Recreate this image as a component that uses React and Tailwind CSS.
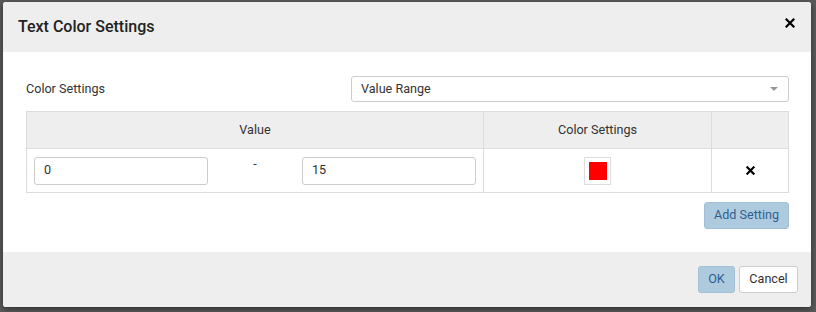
export default function App() {
  return (
    <div className="w-[816px] h-[312px] bg-[#5a5a5a] relative overflow-hidden" style={{ fontFamily: "Roboto, 'Liberation Sans', sans-serif" }}>
      <div className="absolute left-[3px] top-[2px] w-[808px] h-[305px] bg-white rounded-[3px] shadow-[0_2px_6px_rgba(0,0,0,0.5)] flex flex-col overflow-hidden">
        <div className="h-[50px] bg-[#eeeeee] flex items-center justify-between pl-[15px] pr-[16px] shrink-0">
          <span className="text-[16px] font-medium text-[#222]">Text Color Settings</span>
          <svg width="10" height="10" viewBox="0 0 10 10" className="mt-[-8px]">
            <path d="M1.5 1.5 L8.5 8.5 M8.5 1.5 L1.5 8.5" stroke="#000" strokeWidth="2.2" strokeLinecap="square" />
          </svg>
        </div>
        <div className="flex-1 pl-[23px] pr-[22px] pt-[24px] text-[12.6px] text-[#333]">
          <div className="flex items-center h-[26px]">
            <span className="w-[325px]">Color Settings</span>
            <div className="flex-1 h-[26px] border border-[#cccccc] rounded-[3px] flex items-center justify-between pl-[9px] pr-[10px]">
              <span>Value Range</span>
              <svg width="8" height="5" viewBox="0 0 8 5"><path d="M0 0 L8 0 L4 4 Z" fill="#999" /></svg>
            </div>
          </div>
          <div className="mt-[9px] border border-[#dddddd] grid grid-cols-[457px_228px_1fr]">
            <div className="h-[36px] bg-[#eeeeee] flex items-center justify-center border-r border-[#dddddd]">Value</div>
            <div className="h-[36px] bg-[#eeeeee] flex items-center justify-center border-r border-[#dddddd]">Color Settings</div>
            <div className="h-[36px] bg-[#eeeeee]"></div>
            <div className="h-[44px] border-t border-[#dddddd] border-r flex items-center px-[7px]">
              <div className="w-[174px] h-[28px] border border-[#cccccc] rounded-[3px] flex items-center pl-[9px]">0</div>
              <div className="flex-1 flex justify-center mt-[-12px]">-</div>
              <div className="w-[174px] h-[28px] border border-[#cccccc] rounded-[3px] flex items-center pl-[9px]">15</div>
            </div>
            <div className="h-[44px] border-t border-[#dddddd] border-r flex items-center justify-center">
              <div className="w-[27px] h-[28px] border border-[#dddddd] bg-white flex items-center justify-center">
                <div className="w-[18px] h-[18px] bg-[#ff0000]"></div>
              </div>
            </div>
            <div className="h-[44px] border-t border-[#dddddd] flex items-center justify-center">
              <svg width="9" height="9" viewBox="0 0 10 10">
                <path d="M1.5 1.5 L8.5 8.5 M8.5 1.5 L1.5 8.5" stroke="#000" strokeWidth="2.4" strokeLinecap="square" />
              </svg>
            </div>
          </div>
          <div className="flex justify-end mt-[9px]">
            <button className="h-[27px] px-[9px] rounded-[3px] bg-[#aecadf] border border-[#a3c0d6] text-[#2f5f8f]">Add Setting</button>
          </div>
        </div>
        <div className="h-[55px] bg-[#eeeeee] flex items-center justify-end gap-[4px] pr-[13px] shrink-0 text-[12.6px]">
          <button className="h-[27px] w-[37px] rounded-[3px] bg-[#aecadf] border border-[#a3c0d6] text-[#2f5f8f]">OK</button>
          <button className="h-[27px] w-[59px] rounded-[3px] bg-white border border-[#cccccc] text-[#333]">Cancel</button>
        </div>
      </div>
    </div>
  );
}
